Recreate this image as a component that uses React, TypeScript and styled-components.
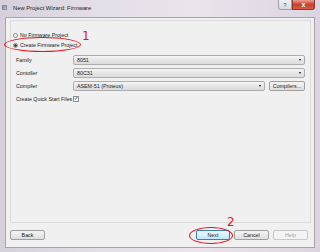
import React from 'react';
import styled, {createGlobalStyle} from 'styled-components';

const RED = '#e8141c';

const GlobalStyle = createGlobalStyle`
  html, body {
    margin: 0;
    padding: 0;
    width: 320px;
    height: 252px;
    overflow: hidden;
    background: #3a3540;
  }
  * {
    box-sizing: border-box;
  }
`;

export default function App() {
  return (
    <>
      <GlobalStyle />
      <Window>
        <TitleBar>
          <AppIcon />
          <Title>New Project Wizard: Firmware</Title>
          <CaptionButtons>
            <HelpCaption>?</HelpCaption>
            <CloseCaption>x</CloseCaption>
          </CaptionButtons>
        </TitleBar>
        <Client>
          <Panel>
            <RadioRow>
              <Radio />
              <span>No Firmware Project</span>
            </RadioRow>
            <RadioRow>
              <Radio checked />
              <span>Create Firmware Project</span>
            </RadioRow>
            <Form>
              <Label>Family</Label>
              <Select>
                <span>8051</span>
                <Arrow />
              </Select>
              <Label>Contoller</Label>
              <Select>
                <span>80C31</span>
                <Arrow />
              </Select>
              <Label>Compiler</Label>
              <CompilerRow>
                <Select>
                  <span>ASEM-51 (Proteus)</span>
                  <Arrow />
                </Select>
                <Button width={36}>Compilers...</Button>
              </CompilerRow>
              <Label>Create Quick Start Files</Label>
              <Checkbox>
                <svg width="5" height="5" viewBox="0 0 5 5">
                  <path d="M1 2.4 L2 3.6 L4 0.8" fill="none" stroke="#2a4fa0" strokeWidth="0.9" />
                </svg>
              </Checkbox>
            </Form>
          </Panel>
          <Footer>
            <Button width={35}>Back</Button>
            <Spacer />
            <Button width={34} primary>Next</Button>
            <Button width={35}>Cancel</Button>
            <Button width={35} disabled>Help</Button>
          </Footer>
        </Client>
        <Ellipse left={4} top={37} width={77} height={15} />
        <Mark left={82} top={30}>1</Mark>
        <Ellipse left={189} top={227} width={44} height={17} />
        <Mark left={227} top={216}>2</Mark>
      </Window>
    </>
  );
}

const Window = styled.div`
  position: relative;
  width: 320px;
  height: 252px;
  display: flex;
  flex-direction: column;
  padding: 0 5px 4px 5px;
  background: linear-gradient(to right, #d6d0dc 0%, #e3dee8 30%, #ece4ec 60%, #dcd4e0 100%);
  font-family: 'Liberation Sans', Arial, sans-serif;
  color: #1a1a1a;
`;

const TitleBar = styled.div`
  height: 17px;
  display: flex;
  align-items: center;
  margin-left: -3px;
  margin-right: -5px;
`;

const AppIcon = styled.div`
  width: 5px;
  height: 5px;
  margin-top: -2px;
  background: linear-gradient(135deg, #7a8aa0, #c0c8d4);
  border: 1px solid #8890a0;
`;

const Title = styled.div`
  margin-left: 6px;
  margin-top: -2px;
  font-size: 5.8px;
  color: #222;
`;

const CaptionButtons = styled.div`
  margin-left: auto;
  align-self: flex-start;
  display: flex;
  margin-right: 5px;
`;

const HelpCaption = styled.div`
  width: 14px;
  height: 10px;
  border: 1px solid #9ca3ae;
  border-top: none;
  border-radius: 0 0 0 3px;
  background: linear-gradient(#eef0f4, #d6dbe2);
  font-size: 6px;
  color: #555;
  display: flex;
  align-items: center;
  justify-content: center;
`;

const CloseCaption = styled.div`
  width: 23px;
  height: 10px;
  border: 1px solid #8a3a30;
  border-top: none;
  border-radius: 0 0 3px 0;
  background: linear-gradient(#e8a090, #c8402e 50%, #d45c44);
  font-size: 7px;
  font-weight: bold;
  color: #fff;
  display: flex;
  align-items: center;
  justify-content: center;
  line-height: 1;
`;

const Client = styled.div`
  flex: 1;
  display: flex;
  flex-direction: column;
  background: #f0f0f0;
  border: 1px solid #a9a3b0;
`;

const Panel = styled.div`
  flex: 1;
  margin: 2px 3px 0 4px;
  border: 1px solid #dcdcdc;
  padding: 9px 5px 0 2px;
  display: flex;
  flex-direction: column;
  font-size: 5.3px;
`;

const RadioRow = styled.div`
  height: 10px;
  display: flex;
  align-items: center;
  gap: 2px;
`;

const Radio = styled.div<{checked?: boolean}>`
  width: 5px;
  height: 5px;
  border-radius: 50%;
  border: 1px solid #8a8a8a;
  background: ${p => (p.checked ? 'radial-gradient(circle, #2f4f7a 0 1.3px, #e8eef4 1.5px)' : '#fafafa')};
`;

const Form = styled.div`
  margin-top: 3px;
  padding-left: 3px;
  display: grid;
  grid-template-columns: 57px 1fr;
  grid-auto-rows: 13px;
  align-items: center;
`;

const Label = styled.div`
  white-space: nowrap;
`;

const Select = styled.div`
  flex: 1;
  height: 10px;
  display: flex;
  align-items: center;
  padding: 0 3px 0 3px;
  border: 1px solid #adadad;
  border-radius: 2px;
  background: linear-gradient(#f5f5f5, #e6e6e6 50%, #dcdcdc);
`;

const Arrow = styled.div`
  margin-left: auto;
  width: 0;
  height: 0;
  border-left: 1.5px solid transparent;
  border-right: 1.5px solid transparent;
  border-top: 2px solid #111;
`;

const CompilerRow = styled.div`
  display: flex;
  align-items: center;
  gap: 4px;
`;

const Checkbox = styled.div`
  width: 6px;
  height: 6px;
  border: 1px solid #8e8f8f;
  background: #f4f6f8;
  display: flex;
  align-items: center;
  justify-content: center;
`;

const Footer = styled.div`
  height: 24px;
  display: flex;
  align-items: center;
  gap: 4px;
  padding: 0 6px 0 4px;
`;

const Spacer = styled.div`
  flex: 1;
`;

const Button = styled.div<{width: number; primary?: boolean; disabled?: boolean}>`
  width: ${p => p.width}px;
  height: 10px;
  display: flex;
  align-items: center;
  justify-content: center;
  font-size: 5.3px;
  border-radius: 2px;
  border: 1px solid ${p => (p.primary ? '#3c7fb1' : p.disabled ? '#c8c8c8' : '#a0a0a0')};
  color: ${p => (p.disabled ? '#a0a0a0' : '#1a1a1a')};
  background: ${p =>
    p.primary
      ? 'linear-gradient(#eaf6fd, #d9f0fc 50%, #bee6fd)'
      : p.disabled
        ? '#f4f4f4'
        : 'linear-gradient(#f2f2f2, #ebebeb 50%, #dddddd)'};
`;

const Ellipse = styled.div<{left: number; top: number; width: number; height: number}>`
  position: absolute;
  left: ${p => p.left}px;
  top: ${p => p.top}px;
  width: ${p => p.width}px;
  height: ${p => p.height}px;
  border: 1px solid ${RED};
  border-radius: 50%;
  pointer-events: none;
`;

const Mark = styled.div<{left: number; top: number}>`
  position: absolute;
  left: ${p => p.left}px;
  top: ${p => p.top}px;
  font-family: 'DejaVu Sans', 'Liberation Sans', sans-serif;
  font-size: 12px;
  line-height: 1;
  color: ${RED};
`;
